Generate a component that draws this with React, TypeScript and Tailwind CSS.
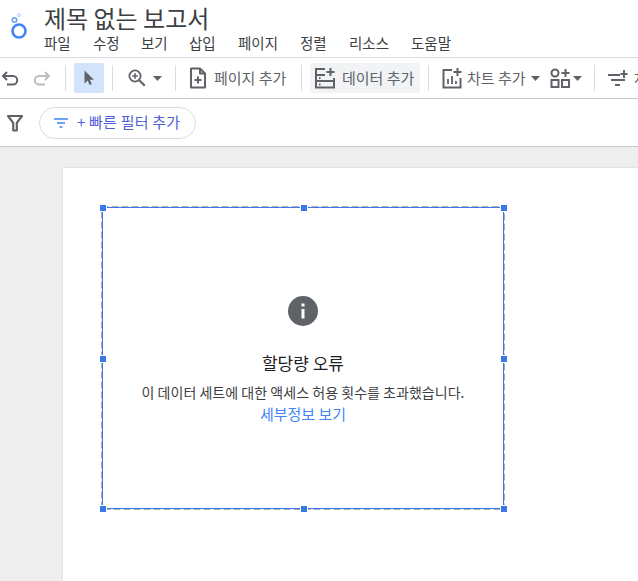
const font = { fontFamily: '"Noto Sans CJK KR", "Liberation Sans", sans-serif' };

const menus = [
  { label: "파일", width: "w-[49px]" },
  { label: "수정", width: "w-[48px]" },
  { label: "보기", width: "w-[48px]" },
  { label: "삽입", width: "w-[49px]" },
  { label: "페이지", width: "w-[62px]" },
  { label: "정렬", width: "w-[49px]" },
  { label: "리소스", width: "w-[62px]" },
  { label: "도움말", width: "w-[50px]" },
];

const Divider = ({ className }: { className: string }) => (
  <div className={`w-px h-[26px] bg-[#dadce0] shrink-0 ${className}`} />
);

const Caret = ({ className }: { className: string }) => (
  <svg width="9" height="5" viewBox="0 0 9 5" className={`shrink-0 ${className}`}>
    <path d="M0 0h9L4.5 5z" fill="#5f6368" />
  </svg>
);

const Handle = ({ className }: { className: string }) => (
  <div className={`absolute w-[6px] h-[6px] bg-[#3b78e7] ring-1 ring-white ${className}`} />
);

export default function App() {
  return (
    <div className="w-[638px] h-[581px] overflow-hidden bg-white flex flex-col" style={font}>
      {/* header */}
      <div className="h-[58px] shrink-0 border-b border-[#dadce0] flex">
        <div className="w-[44px] shrink-0 flex pl-[10px] pt-[13px]">
          <svg width="18" height="26" viewBox="0 0 18 26">
            <circle cx="9" cy="18" r="6.5" fill="none" stroke="#4285f4" strokeWidth="2.6" />
            <circle cx="4.5" cy="7" r="2.3" fill="none" stroke="#669df6" strokeWidth="1.5" />
            <circle cx="9" cy="2" r="1.5" fill="none" stroke="#aecbfa" strokeWidth="1" />
          </svg>
        </div>
        <div className="flex flex-col">
          <div className="text-[24px] leading-[30px] h-[33px] pt-[3px] text-[#3c4043] whitespace-nowrap">
            제목 없는 보고서
          </div>
          <div className="flex text-[14.5px] leading-[18px] text-[#3c4043] mt-[1px]">
            {menus.map((m) => (
              <div key={m.label} className={`${m.width} whitespace-nowrap`}>
                {m.label}
              </div>
            ))}
          </div>
        </div>
      </div>

      {/* toolbar */}
      <div className="h-[41px] shrink-0 border-b border-[#c4c7cc] flex items-center text-[15px] text-[#5f6368] whitespace-nowrap overflow-hidden">
        <svg width="18" height="18" viewBox="0 0 18 18" className="ml-[1px] shrink-0" fill="none" stroke="#5f6368" strokeWidth="2">
          <path d="M6 3L2 7l4 4M2 7h10a4.2 4.2 0 0 1 0 8.4H6" />
        </svg>
        <svg width="18" height="18" viewBox="0 0 18 18" className="ml-[14px] shrink-0" fill="none" stroke="#bdbdbd" strokeWidth="2">
          <path d="M12 3l4 4-4 4M16 7H6a4.2 4.2 0 0 0 0 8.4h6" />
        </svg>
        <Divider className="ml-[14px]" />
        <div className="ml-[8px] w-[30px] h-[30px] rounded-[2px] bg-[#d2e3fc] flex items-center justify-center shrink-0">
          <svg width="16" height="18" viewBox="0 0 16 18" fill="#5f6368">
            <path d="M3.5 1.5v13l3.2-3 2 4.6 2.1-1-2-4.4H13z" />
          </svg>
        </div>
        <Divider className="ml-[8px]" />
        <svg width="20" height="20" viewBox="0 0 20 20" className="ml-[14px] shrink-0" fill="none" stroke="#5f6368" strokeWidth="1.8">
          <circle cx="8" cy="8" r="5.6" />
          <path d="M12.2 12.2l5.6 5.6" strokeWidth="2.2" />
          <path d="M8 5.2v5.6M5.2 8h5.6" strokeWidth="1.6" />
        </svg>
        <Caret className="ml-[6px]" />
        <Divider className="ml-[13px]" />
        <svg width="18" height="22" viewBox="0 0 18 22" className="ml-[13px] shrink-0" fill="none" stroke="#5f6368" strokeWidth="2">
          <path d="M2 1.5h9l5 5V20.5H2zM11 1.5v5h5" strokeLinejoin="round" />
          <path d="M9 9.5v7M5.5 13h7" />
        </svg>
        <span className="ml-[7px] w-[73px] shrink-0">페이지 추가</span>
        <Divider className="ml-[14px]" />
        <div className="ml-[8px] w-[110px] h-[30px] rounded-[2px] bg-[#f1f3f4] flex items-center shrink-0">
          <svg width="21" height="22" viewBox="0 0 21 22" className="ml-[4px] shrink-0" fill="none" stroke="#5f6368" strokeWidth="2">
            <path d="M11 2H2v18.5h18V11M2 8h9M2 14h18" />
            <path d="M16.5 1v8M12.5 5h8" />
            <path d="M5 11h1.5M5 17.5h1.5" />
          </svg>
          <span className="ml-[7px]">데이터 추가</span>
        </div>
        <Divider className="ml-[8px]" />
        <svg width="20" height="21" viewBox="0 0 20 21" className="ml-[13px] shrink-0" fill="none" stroke="#5f6368" strokeWidth="2">
          <path d="M10 2H1.5v17.5h17V10" />
          <path d="M15.5 0v8M11.5 4h8" />
          <path d="M6 16v-5M10 16V8M14 16v-3" strokeWidth="1.8" />
        </svg>
        <span className="ml-[5px] w-[60px] shrink-0">차트 추가</span>
        <Caret className="ml-[4px]" />
        <svg width="20" height="20" viewBox="0 0 20 20" className="ml-[10px] shrink-0" fill="none" stroke="#5f6368" strokeWidth="2">
          <circle cx="5" cy="5" r="3.5" />
          <rect x="1.5" y="12" width="7" height="7" />
          <rect x="12" y="12" width="7" height="7" />
          <path d="M15.5 1v8M11.5 5h8" />
        </svg>
        <Caret className="ml-[3px]" />
        <Divider className="ml-[12px]" />
        <svg width="20" height="18" viewBox="0 0 20 18" className="ml-[13px] shrink-0" fill="none" stroke="#5f6368" strokeWidth="2">
          <path d="M0 6h12M3 11h14M7 16h5" />
          <path d="M16 1v8M12.5 5h7" />
        </svg>
        <span className="ml-[6px] shrink-0">차트 추가</span>
      </div>

      {/* filter bar */}
      <div className="h-[48px] shrink-0 border-b border-[#c4c7cc] flex items-center">
        <svg width="18" height="18" viewBox="0 0 18 18" className="ml-[6px] shrink-0" fill="none" stroke="#5f6368" strokeWidth="2.2">
          <path d="M2 2h14l-5.2 6.8V16.5H7.2V8.8z" strokeLinejoin="round" />
        </svg>
        <div className="ml-[15px] w-[157px] h-[32px] rounded-full border border-[#dadce0] flex items-center text-[15px] shrink-0">
          <svg width="16" height="12" viewBox="0 0 16 12" className="ml-[13px] shrink-0" fill="none" stroke="#4285f4" strokeWidth="1.6">
            <path d="M1 2h14M4 6h8M6.5 10h3" />
          </svg>
          <span className="ml-[8px] text-[#4f5fd8] whitespace-nowrap tracking-[0.2px]">+ 빠른 필터 추가</span>
        </div>
      </div>

      {/* canvas */}
      <div className="flex-1 bg-[#eeeeee] pl-[63px] pt-[21px] overflow-hidden">
        <div className="bg-white w-[640px] h-[500px] pl-[39px] pt-[39px] shadow-[0_0_2px_rgba(0,0,0,0.15)]">
          <div className="relative w-[402px] h-[302px] border border-[#3b78e7] flex flex-col items-center">
            {/* grey dashes sit just outside the blue selection line */}
            <svg width="404" height="304" className="absolute -left-[2px] -top-[2px] pointer-events-none" fill="none">
              <rect x="0.5" y="0.5" width="403" height="303" stroke="#a8abb0" strokeDasharray="7 3" />
            </svg>
            <Handle className="-left-[3px] -top-[3px]" />
            <Handle className="left-[198px] -top-[3px]" />
            <Handle className="-right-[4px] -top-[3px]" />
            <Handle className="-left-[3px] top-[148px]" />
            <Handle className="-right-[4px] top-[148px]" />
            <Handle className="-left-[3px] -bottom-[4px]" />
            <Handle className="left-[198px] -bottom-[4px]" />
            <Handle className="-right-[4px] -bottom-[4px]" />
            <svg width="30" height="30" viewBox="0 0 30 30" className="mt-[88px] shrink-0">
              <circle cx="15" cy="15" r="15" fill="#5f6368" />
              <rect x="13.5" y="7.5" width="3" height="3" fill="#fff" />
              <rect x="13.5" y="13" width="3" height="9.5" fill="#fff" />
            </svg>
            <div className="mt-[25px] text-[17px] leading-[24px] text-[#202124]">할당량 오류</div>
            <div className="mt-[7px] text-[14px] leading-[20px] text-[#3c4043] whitespace-nowrap tracking-[0.03px]">
              이 데이터 세트에 대한 액세스 허용 횟수를 초과했습니다.
            </div>
            <div className="mt-[2px] text-[15px] leading-[20px] text-[#4285f4]">세부정보 보기</div>
          </div>
        </div>
      </div>
    </div>
  );
}
